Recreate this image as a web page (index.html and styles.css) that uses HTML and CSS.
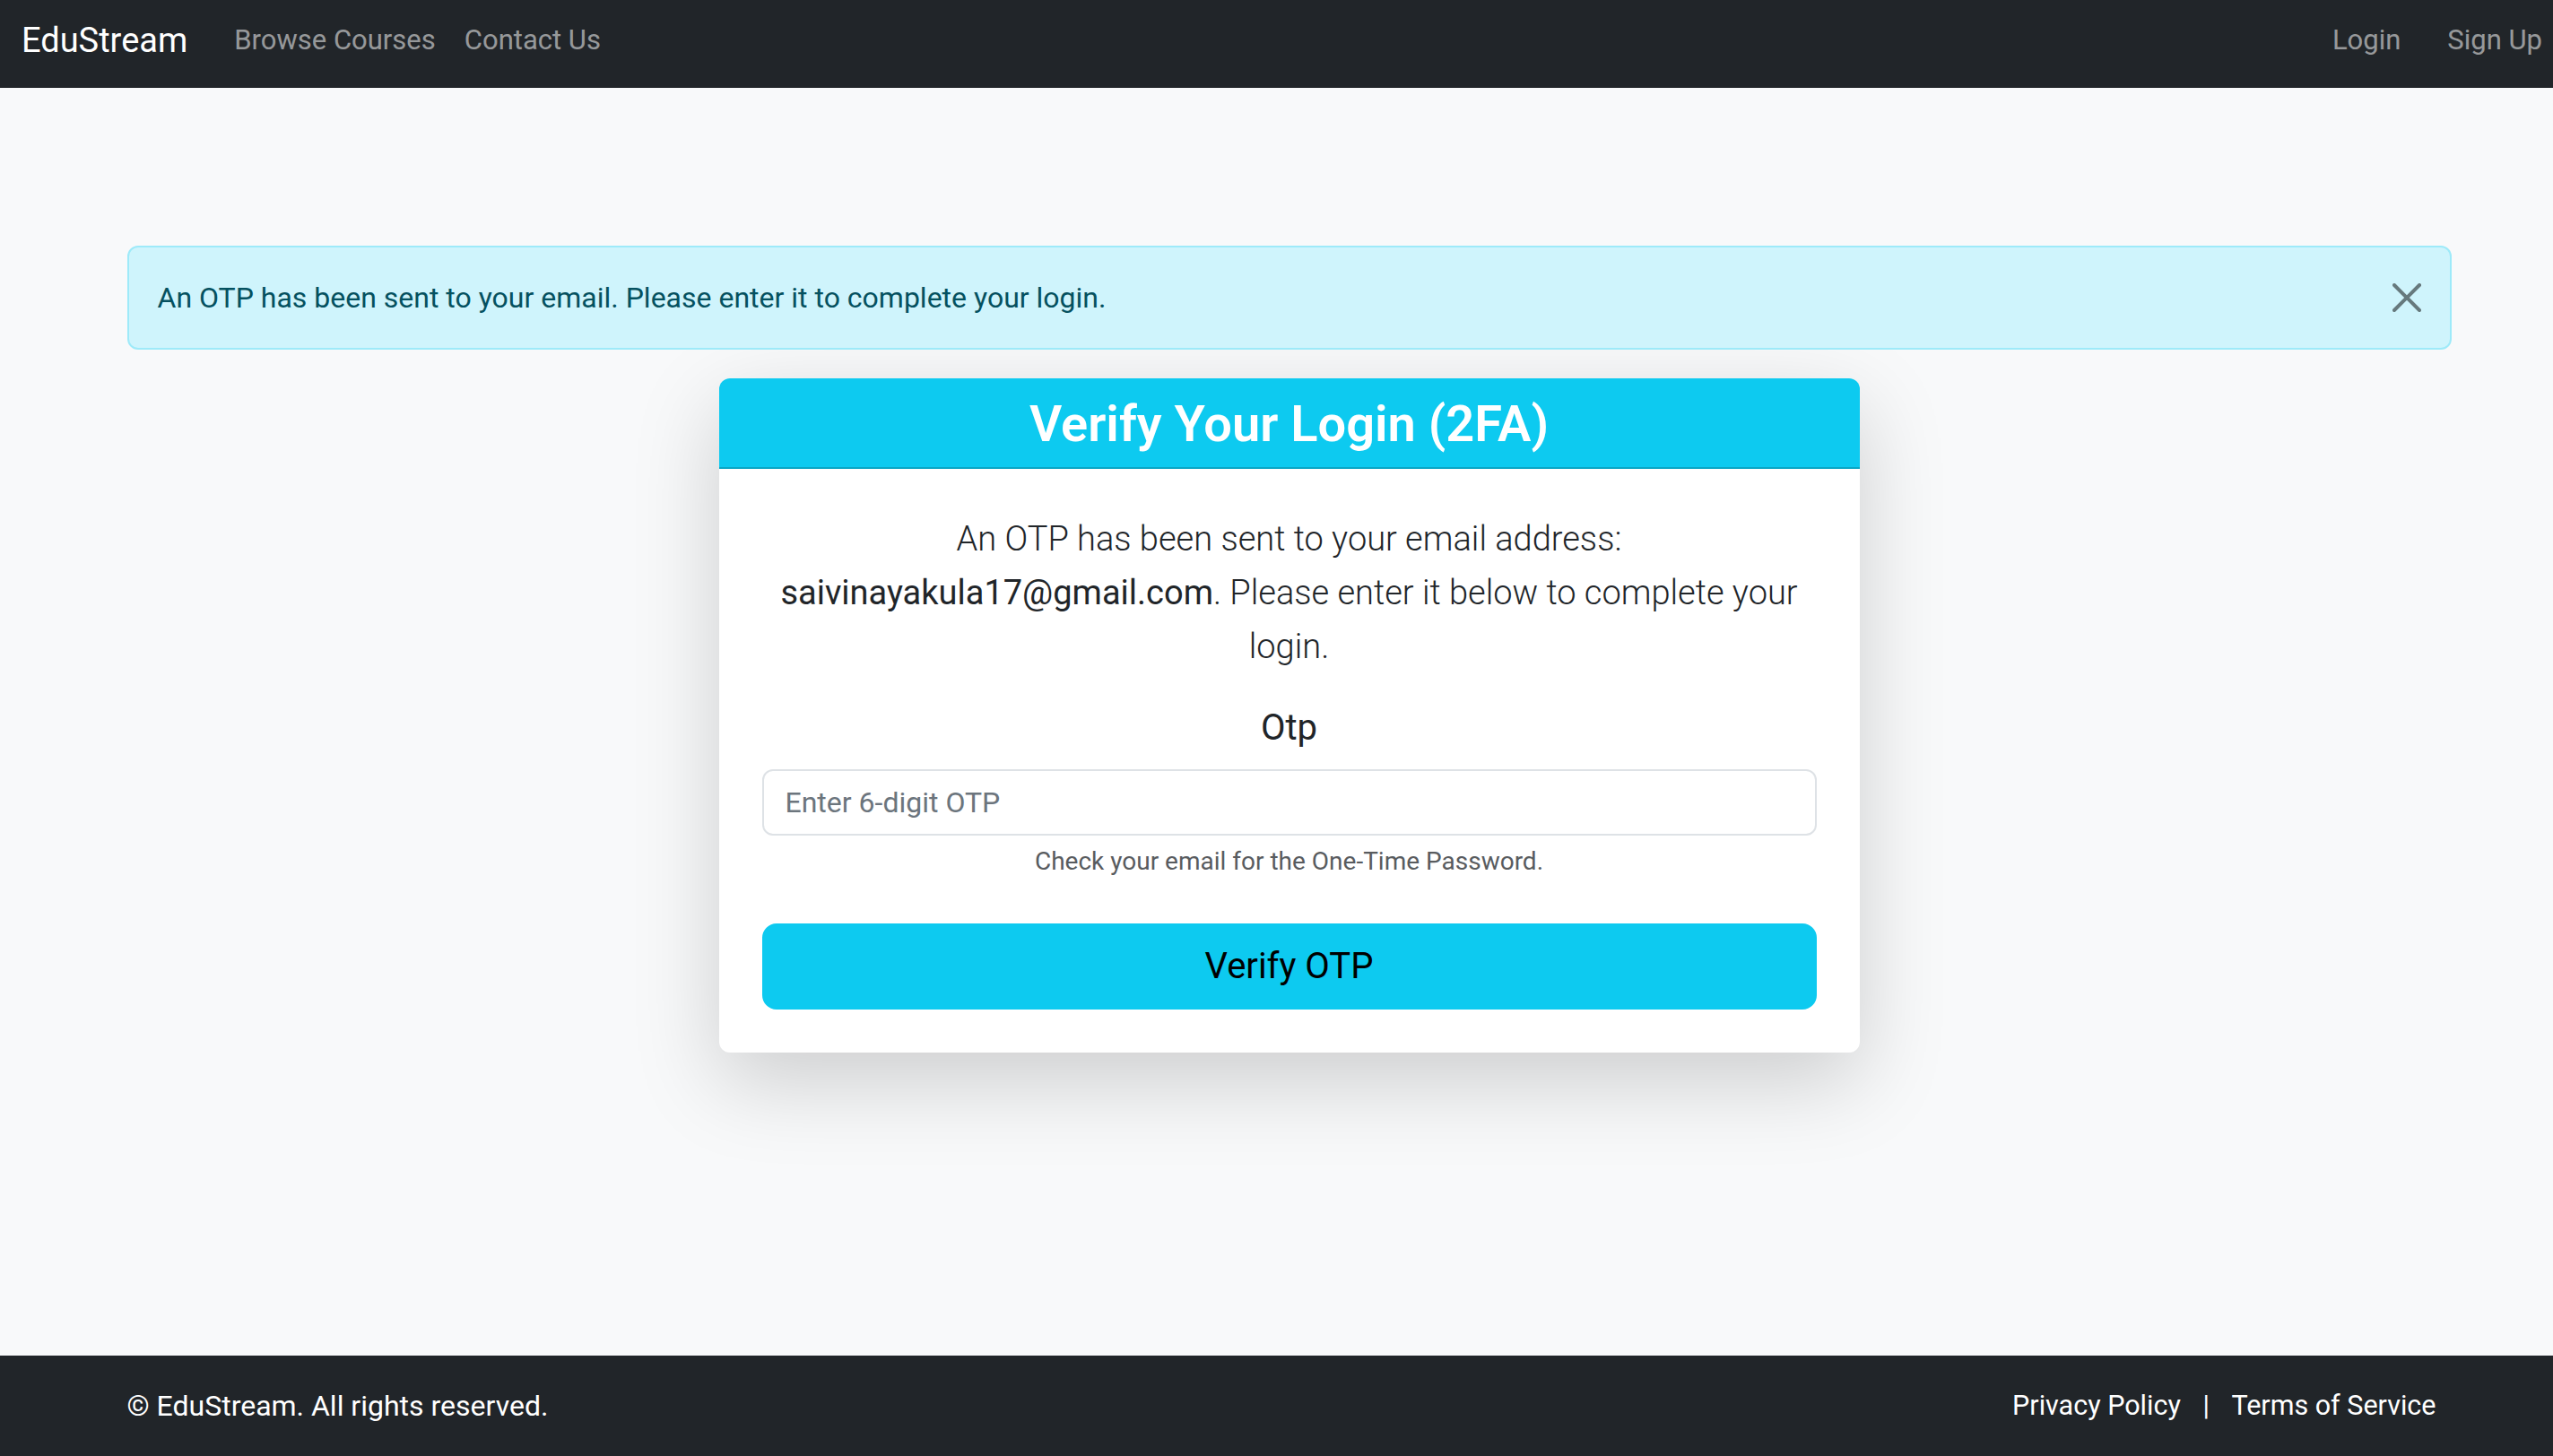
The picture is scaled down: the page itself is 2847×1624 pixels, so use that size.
FILE: index.html
```html
<!DOCTYPE html>
<html lang="en">
<head>
<meta charset="utf-8">
<title>EduStream - Verify Login</title>
<link rel="stylesheet" href="styles.css">
</head>
<body>
<nav class="navbar">
  <div class="nav-left">
    <a class="brand" href="#">EduStream</a>
    <a class="nav-link" href="#">Browse Courses</a>
    <a class="nav-link" href="#">Contact Us</a>
  </div>
  <div class="nav-right">
    <a class="nav-link" href="#">Login</a>
    <a class="nav-link" href="#">Sign Up</a>
  </div>
</nav>

<main class="main">
  <div class="container">
    <div class="alert">
      An OTP has been sent to your email. Please enter it to complete your login.
      <button class="btn-close" type="button" aria-label="Close">
        <svg viewBox="0 0 16 16" width="32" height="32"><path d="M.293.293a1 1 0 0 1 1.414 0L8 6.586 14.293.293a1 1 0 1 1 1.414 1.414L9.414 8l6.293 6.293a1 1 0 0 1-1.414 1.414L8 9.414l-6.293 6.293a1 1 0 0 1-1.414-1.414L6.586 8 .293 1.707a1 1 0 0 1 0-1.414z" fill="#000"/></svg>
      </button>
    </div>

    <div class="card">
      <div class="card-header">
        <h3 class="card-title">Verify Your Login (2FA)</h3>
      </div>
      <div class="card-body">
        <p class="lead">An OTP has been sent to your email address:<br><span class="email">saivinayakula17@gmail.com</span>. Please enter it below to complete your<br>login.</p>
        <form class="otp-form">
          <label class="form-label" for="otp">Otp</label>
          <input class="form-control" id="otp" type="text" placeholder="Enter 6-digit OTP">
          <div class="form-text">Check your email for the One-Time Password.</div>
          <button class="btn-verify" type="button">Verify OTP</button>
        </form>
      </div>
    </div>
  </div>
</main>

<footer class="footer">
  <div class="container footer-inner">
    <span>© EduStream. All rights reserved.</span>
    <span class="footer-links"><a href="#" class="flink">Privacy Policy</a> | <a href="#" class="flink">Terms of Service</a></span>
  </div>
</footer>
</body>
</html>
```

FILE: styles.css
```css
html {
  overflow: hidden;
}
body {
  margin: 0;
  width: 2875px;
  min-height: 1624px;
  display: flex;
  flex-direction: column;
  background: #f8f9fa;
  font-family: Roboto, "Liberation Sans", sans-serif;
  color: #212529;
  font-size: 32px;
  line-height: 1.5;
}
a {
  text-decoration: none;
}

/* navbar */
.navbar {
  height: 98px;
  box-sizing: border-box;
  background: #212529;
  display: flex;
  align-items: center;
  justify-content: space-between;
  padding: 0 24px 8px 24px;
}
.nav-left, .nav-right {
  display: flex;
  align-items: center;
}
.brand {
  color: #fff;
  font-size: 38px;
  margin-right: 36px;
  line-height: 60px;
}
.nav-link {
  color: rgba(255, 255, 255, 0.55);
  font-size: 31px;
  padding: 0 16px;
  line-height: 48px;
}
.nav-right .nav-link:first-child {
  margin-right: 20px;
}

/* main */
.main {
  flex: 1;
  padding-top: 176px;
}
.container {
  width: 2592px;
  margin: 0 auto;
}
.alert {
  position: relative;
  background: #cff4fc;
  border: 2px solid #9eeaf9;
  color: #055160;
  border-radius: 12px;
  padding: 32px 96px 32px 32px;
  line-height: 48px;
  margin-bottom: 32px;
}
.btn-close {
  position: absolute;
  top: 0;
  right: 0;
  border: 0;
  background: transparent;
  padding: 40px 32px;
  opacity: 0.5;
  display: flex;
  cursor: pointer;
}

/* card */
.card {
  width: 1272px;
  margin: 0 auto;
  background: #fff;
  border-radius: 12px;
  box-shadow: 0 32px 96px rgba(0, 0, 0, 0.175);
  overflow: hidden;
}
.card-header {
  background: #0dcaf0;
  border-bottom: 2px solid rgba(0, 0, 0, 0.175);
  padding: 18px 32px 14px;
  text-align: center;
}
.card-title {
  margin: 0;
  color: #fff;
  font-size: 56px;
  font-weight: 600;
  line-height: 1.2;
}
.card-body {
  padding: 48px;
  text-align: center;
}
.lead {
  margin: 0 0 31px;
  font-size: 38px;
  font-weight: 300;
  line-height: 60px;
  color: #212529;
}
.email {
  font-weight: 400;
}
.otp-form {
  display: flex;
  flex-direction: column;
}
.form-label {
  font-size: 40px;
  line-height: 60px;
  margin-bottom: 16px;
}
.form-control {
  display: block;
  box-sizing: border-box;
  width: 100%;
  height: 74px;
  border: 2px solid #dee2e6;
  border-radius: 12px;
  padding: 11px 24px;
  font-family: inherit;
  font-size: 32px;
  line-height: 48px;
  color: #212529;
  background: #fff;
}
.form-control::placeholder {
  color: #6c757d;
}
.form-text {
  margin-top: 8px;
  font-size: 28px;
  line-height: 42px;
  color: #595c5f;
}
.btn-verify {
  margin-top: 48px;
  width: 100%;
  background: #0dcaf0;
  border: 2px solid #0dcaf0;
  border-radius: 16px;
  padding: 16px 32px;
  font-family: inherit;
  font-size: 40px;
  line-height: 60px;
  color: #000;
  cursor: pointer;
}

/* footer */
.footer {
  background: #212529;
  color: #fff;
  padding: 32px 0;
  line-height: 48px;
}
.footer-inner {
  display: flex;
  justify-content: space-between;
  align-items: center;
}
.footer-links {
  font-size: 30.5px;
}
.flink {
  color: #fff;
  margin: 0 17px;
}
```
